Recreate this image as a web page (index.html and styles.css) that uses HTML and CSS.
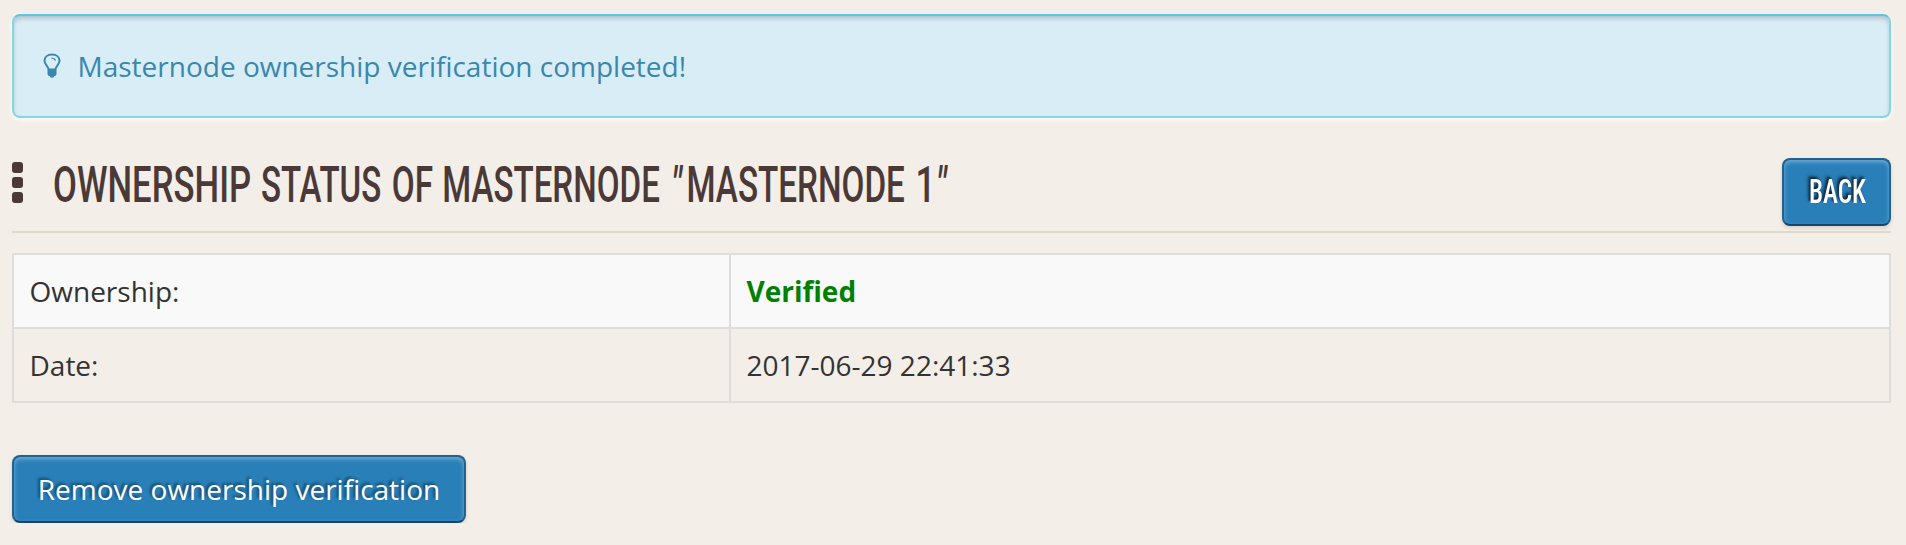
FILE: index.html
```
<!DOCTYPE html>
<html lang="en">
<head>
<meta charset="utf-8">
<title>Masternode ownership</title>
<link rel="stylesheet" href="styles.css">
</head>
<body>
<main class="page">
  <div class="alert">
    <svg class="bulb" width="18" height="26" viewBox="0 0 18 26" aria-hidden="true">
      <path d="M5.5 16C5.3 13.5 1.5 11.5 1.5 7.8C1.5 4 4.7 1.5 9 1.5S16.500 4 16.500 7.800C16.500 11.500 12.700 13.500 12.500 16" fill="none" stroke="currentColor" stroke-width="2"/>
      <path d="M8.500 5.300C10.500 5.100 12 6 12.500 7.700" fill="none" stroke="currentColor" stroke-width="1.200"/>
      <path d="M4.500 15.500h9v5.500q0 2-2.300 2.300q-.4 1.500-2.200 1.500t-2.200-1.500q-2.300-.3-2.300-2.300z" fill="currentColor"/>
    </svg>
    <span>Masternode ownership verification completed!</span>
  </div>
  <header class="heading">
    <div class="dots"><i></i><i></i><i></i></div>
    <h1 class="title">
      <svg class="title-text" width="910" height="60" viewBox="0 0 1300 60" preserveAspectRatio="none">
        <text y="46" lengthAdjust="spacingAndGlyphs" x="0" textLength="283">OWNERSHIP</text>
        <text y="46" lengthAdjust="spacingAndGlyphs" x="297" textLength="172">STATUS</text>
        <text y="46" lengthAdjust="spacingAndGlyphs" x="484" textLength="59">OF</text>
        <text y="46" lengthAdjust="spacingAndGlyphs" x="556" textLength="311">MASTERNODE</text>
        <text y="46" class="quote" x="883">"</text>
        <text y="46" lengthAdjust="spacingAndGlyphs" x="905" textLength="312">MASTERNODE</text>
        <text y="46" x="1232">1</text>
        <text y="46" class="quote" x="1261">"</text>
      </svg>
    </h1>
    <a class="btn back"><svg class="back-text" width="57" height="40"><text x="1" y="31" lengthAdjust="spacingAndGlyphs" textLength="57">BACK</text></svg></a>
  </header>
  <table class="info">
    <tr><td class="label">Ownership:</td><td><b class="verified">Verified</b></td></tr>
    <tr><td class="label">Date:</td><td>2017-06-29 22:41:33</td></tr>
  </table>
  <a class="btn remove">Remove ownership verification</a>
</main>
</body>
</html>
```
FILE: styles.css
```
* { box-sizing: border-box; }
body {
  margin: 0;
  background: #f3eee8;
  color: #333;
  font: 28px/40px "Open Sans", sans-serif;
}
.page { padding: 14px 15px 0 12px; }
.alert {
  height: 104px;
  display: flex;
  align-items: center;
  gap: 17px;
  padding: 0 28px 0 28.5px;
  color: #3a87ad;
  background: #d9edf7;
  border: 2px solid #85d5e5;
  border-top-color: #5bc6dd;
  border-radius: 8px;
  box-shadow: inset 0 3px 5px -1px rgba(0,0,0,.22), 0 2px 4px #fff;
}
.heading {
  height: 115px;
  display: flex;
  align-items: flex-start;
  border-bottom: 2px solid #e0dacd;
}
.dots { display: grid; gap: 4px; width: 11px; margin: 44px 0 0 -0.5px; }
.dots i { height: 11px; border-radius: 3px; background: #4a3936; }
.title { flex: 1; margin: 38px 0 0 30.5px; height: 60px; }
.title-text, .back-text { display: block; overflow: visible; }
.title-text {
  font: 500 50.5px Roboto, sans-serif;
  font-stretch: normal;
  font-variation-settings: "wght" 450;
  fill: #4a3936;
}
.quote { font-style: italic; }
.btn {
  display: flex;
  align-items: center;
  justify-content: center;
  height: 68px;
  padding-bottom: 1px;
  color: #fff;
  background: #2980b9;
  border: 2px solid #20638f;
  border-bottom-color: #16476a;
  border-radius: 8px;
  text-shadow: -2px -2px 3px rgba(0,0,0,.5);
  box-shadow: inset 0 2px 4px rgba(255,255,255,.35), 0 2px 4px rgba(0,0,0,.12);
}
.back { width: 109px; margin-top: 40px; }
.back-text {
  font: 500 34px Roboto, sans-serif;
  font-stretch: 75%;
  fill: #fff;
  filter: drop-shadow(-2px -2px 1px rgba(0,0,0,.4));
}
.info {
  width: 100%;
  margin: 20px 0 52px;
  border-collapse: separate;
  border-spacing: 0;
  border: 2px solid #ddd;
  table-layout: fixed;
}
.info td { height: 72px; padding: 0 15px 0 15.5px; }
.info tr:first-child td { height: 74px; background: #f9f9f9; border-bottom: 2px solid #ddd; }
.info .label { width: 717px; border-right: 2px solid #ddd; }
.verified { color: #008000; font-weight: 700; }
.remove { width: 454px; }
```
